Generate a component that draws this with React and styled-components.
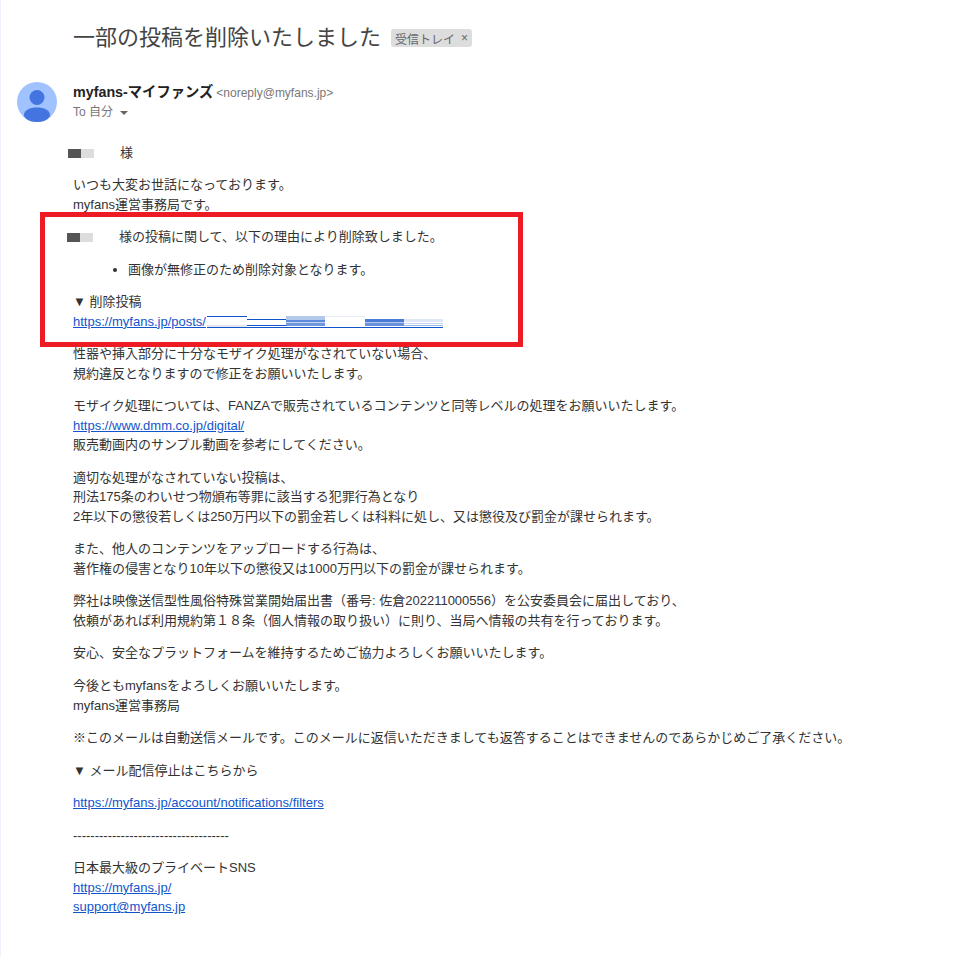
import React from "react";
import styled, { createGlobalStyle } from "styled-components";

const Global = createGlobalStyle`
  html, body { margin: 0; padding: 0; background: #fff; }
  body { font-family: "Liberation Sans", "Noto Sans CJK JP", sans-serif; color: #222; }
`;
const Page = styled.div`
  position: relative;
  width: 964px;
  height: 956px;
  box-sizing: border-box;
  overflow: hidden;
  border-left: 1px solid #eef2fb;
  padding: 24px 0 0 16px;
`;
const TitleRow = styled.div`
  display: flex;
  align-items: center;
  padding-left: 56px;
  height: 28px;
`;
const Title = styled.h1`
  margin: 0;
  font-size: 22px;
  line-height: 28px;
  font-weight: 400;
  color: #444;
`;
const Label = styled.span`
  display: inline-flex;
  align-items: center;
  gap: 6px;
  height: 18px;
  margin-left: 10px;
  padding: 0 4px;
  border-radius: 3px;
  background: #ddd;
  color: #666;
  font-size: 12px;
`;
const LabelClose = styled.span`
  font-size: 12px;
  color: #666;
`;
const Header = styled.div`
  display: flex;
  gap: 16px;
  margin-top: 30px;
`;
const AvatarWrap = styled.div`
  width: 40px;
  height: 40px;
  flex: none;
`;
const Meta = styled.div`
  padding-top: 1px;
`;
const SenderLine = styled.div`
  display: flex;
  align-items: baseline;
  gap: 3px;
  line-height: 18px;
`;
const SenderName = styled.span`
  font-size: 14.3px;
  font-weight: 700;
  color: #222;
`;
const SenderMail = styled.span`
  font-size: 12px;
  color: #777;
`;
const ToLine = styled.div`
  display: flex;
  align-items: center;
  gap: 7px;
  margin-top: 1px;
  font-size: 12px;
  line-height: 18px;
  color: #777;
`;
const Caret = styled.span`
  width: 0;
  height: 0;
  margin-top: 2px;
  border-left: 4px solid transparent;
  border-right: 4px solid transparent;
  border-top: 4px solid #666;
`;
const Body = styled.div`
  margin-top: 20.5px;
  padding-left: 56px;
  font-size: 13px;
  line-height: 19.5px;
  color: #333;
`;
const Para = styled.p`
  margin: 0 0 13.05px;
`;
const List = styled.ul`
  margin: 0 0 13.05px 15px;
  padding: 0 0 0 40px;
`;
const Link = styled.a`
  color: #1155cc;
  text-decoration: underline;
`;
const Blot = styled.span`
  display: inline-flex;
  vertical-align: -1px;
  margin-left: ${(p) => p.$shift}px;
  margin-right: ${(p) => p.$after}px;
`;
const BlotCell = styled.span`
  width: 13px;
  height: 9px;
  background: ${(p) => (p.$dark ? "#555" : "#ddd")};
`;
const Mosaic = styled.svg`
  display: inline-block;
  width: 236px;
  height: 14px;
  margin-left: 1px;
  vertical-align: -3px;
`;
const RedBox = styled.div`
  position: absolute;
  left: 39px;
  top: 212px;
  width: 483px;
  height: 135px;
  box-sizing: border-box;
  border: 5px solid #ed1c24;
`;

const Name = ({ shift, after }) => (
  <Blot $shift={shift} $after={after}>
    <BlotCell $dark />
    <BlotCell />
  </Blot>
);

export default function App() {
  return (
    <Page>
      <Global />
      <TitleRow>
        <Title>一部の投稿を削除いたしました</Title>
        <Label>
          受信トレイ<LabelClose>×</LabelClose>
        </Label>
      </TitleRow>
      <Header>
        <AvatarWrap>
          <svg width="40" height="40" viewBox="0 0 40 40">
            <circle cx="20" cy="20" r="20" fill="#a0c3ff" />
            <circle cx="20" cy="15.5" r="7.5" fill="#4374e0" />
            <path d="M7 33 C7 28 13 25.5 20 25.5 C27 25.5 33 28 33 33 C33 35 30 40 20 40 C10 40 7 35 7 33 Z" fill="#4374e0" />
          </svg>
        </AvatarWrap>
        <Meta>
          <SenderLine>
            <SenderName>myfans-マイファンズ</SenderName>
            <SenderMail>&lt;noreply@myfans.jp&gt;</SenderMail>
          </SenderLine>
          <ToLine>
            <span>To 自分</span>
            <Caret />
          </ToLine>
        </Meta>
      </Header>
      <Body>
        <Para><Name shift={-5} after={26} />様</Para>
        <Para>いつも大変お世話になっております。<br />myfans運営事務局です。</Para>
        <Para><Name shift={-6} after={26} />様の投稿に関して、以下の理由により削除致しました。</Para>
        <List><li>画像が無修正のため削除対象となります。</li></List>
        <Para>
          ▼ 削除投稿<br />
          <Link href="#">https://myfans.jp/posts/</Link>
          <Mosaic viewBox="0 0 236 14">
            <rect x="0" y="1" width="40" height="1" fill="#1155cc" />
            <rect x="0" y="10" width="40" height="2" fill="#e4e8ee" />
            <rect x="40" y="4" width="39" height="1" fill="#1155cc" />
            <rect x="40" y="10" width="39" height="1" fill="#1155cc" />
            <rect x="79" y="1" width="39" height="4" fill="#b3c9ec" />
            <rect x="79" y="5" width="39" height="2" fill="#5d8bdc" />
            <rect x="79" y="7" width="39" height="1" fill="#c5d5f0" />
            <rect x="79" y="8" width="39" height="3" fill="#7096dc" />
            <rect x="118" y="1" width="40" height="1" fill="#e6ebf5" />
            <rect x="158" y="4" width="39" height="3" fill="#4a7bd6" />
            <rect x="158" y="7" width="39" height="1" fill="#b3c9ec" />
            <rect x="158" y="8" width="39" height="3" fill="#6a92dc" />
            <rect x="197" y="4" width="39" height="3" fill="#dfe7f6" />
            <rect x="197" y="8" width="39" height="1" fill="#c5d5f0" />
            <rect x="197" y="10" width="39" height="1" fill="#9db9e8" />
            <rect x="0" y="12" width="236" height="1" fill="#1155cc" />
          </Mosaic>
        </Para>
        <Para>性器や挿入部分に十分なモザイク処理がなされていない場合、<br />規約違反となりますので修正をお願いいたします。</Para>
        <Para>
          モザイク処理については、FANZAで販売されているコンテンツと同等レベルの処理をお願いいたします。<br />
          <Link href="#">https://www.dmm.co.jp/digital/</Link><br />
          販売動画内のサンプル動画を参考にしてください。
        </Para>
        <Para>
          適切な処理がなされていない投稿は、<br />
          刑法175条のわいせつ物頒布等罪に該当する犯罪行為となり<br />
          2年以下の懲役若しくは250万円以下の罰金若しくは科料に処し、又は懲役及び罰金が課せられます。
        </Para>
        <Para>
          また、他人のコンテンツをアップロードする行為は、<br />
          著作権の侵害となり10年以下の懲役又は1000万円以下の罰金が課せられます。
        </Para>
        <Para>
          弊社は映像送信型性風俗特殊営業開始届出書（番号: 佐倉202211000556）を公安委員会に届出しており、<br />
          依頼があれば利用規約第１８条（個人情報の取り扱い）に則り、当局へ情報の共有を行っております。
        </Para>
        <Para>安心、安全なプラットフォームを維持するためご協力よろしくお願いいたします。</Para>
        <Para>今後ともmyfansをよろしくお願いいたします。<br />myfans運営事務局</Para>
        <Para>※このメールは自動送信メールです。このメールに返信いただきましても返答することはできませんのであらかじめご了承ください。</Para>
        <Para>▼ メール配信停止はこちらから</Para>
        <Para><Link href="#">https://myfans.jp/account/notifications/filters</Link></Para>
        <Para>------------------------------------</Para>
        <Para>
          日本最大級のプライベートSNS<br />
          <Link href="#">https://myfans.jp/</Link><br />
          <Link href="#">support@myfans.jp</Link>
        </Para>
      </Body>
      <RedBox />
    </Page>
  );
}
